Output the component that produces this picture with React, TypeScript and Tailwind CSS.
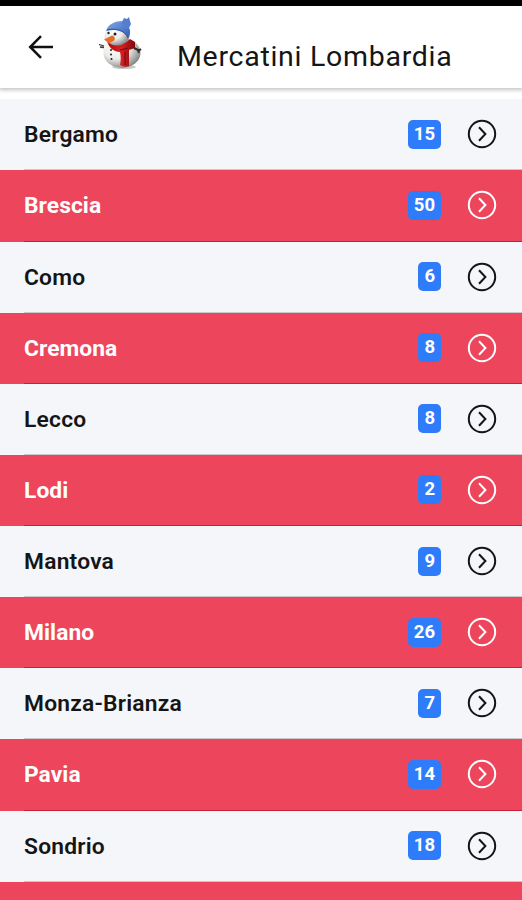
const provinces = [
  { name: "Bergamo", count: 15 },
  { name: "Brescia", count: 50 },
  { name: "Como", count: 6 },
  { name: "Cremona", count: 8 },
  { name: "Lecco", count: 8 },
  { name: "Lodi", count: 2 },
  { name: "Mantova", count: 9 },
  { name: "Milano", count: 26 },
  { name: "Monza-Brianza", count: 7 },
  { name: "Pavia", count: 14 },
  { name: "Sondrio", count: 18 },
];

function BackArrow() {
  return (
    <svg width="26" height="24" viewBox="0 0 26 24" fill="none" stroke="#111" strokeWidth="2.5">
      <path d="M13 1.2 2.2 12 13 22.8M2.2 12H25" />
    </svg>
  );
}

function Snowman() {
  return (
    <svg width="46" height="56" viewBox="0 0 46 56">
      <defs>
        <radialGradient id="snow" cx="0.35" cy="0.35" r="0.7">
          <stop offset="0" stopColor="#ffffff" />
          <stop offset="0.5" stopColor="#ebebe9" />
          <stop offset="1" stopColor="#858583" />
        </radialGradient>
        <linearGradient id="hat" x1="0" y1="0" x2="1" y2="1">
          <stop offset="0" stopColor="#83a9ea" />
          <stop offset="1" stopColor="#315cb4" />
        </linearGradient>
        <linearGradient id="scarf" x1="0" y1="0" x2="1" y2="0">
          <stop offset="0" stopColor="#a80e12" />
          <stop offset="0.5" stopColor="#d92023" />
          <stop offset="1" stopColor="#7d090e" />
        </linearGradient>
      </defs>
      {/* Shadow and body */}
      <ellipse cx="26" cy="50" rx="12" ry="2" fill="#c9c9c7" />
      <ellipse cx="24" cy="36" rx="18.5" ry="15" fill="url(#snow)" />
      {/* Arms */}
      <ellipse cx="5.5" cy="29.5" rx="4.5" ry="3" fill="#f5f5f3" />
      <path d="m1 27.5 5 1.5M2 30l4 .5" stroke="#393634" strokeWidth="1.3" />
      <path d="m36 31 5 2.500 2-1.500M40 33l1 3" stroke="#302d2c" strokeWidth="2" fill="none" />
      {/* Scarf */}
      <path d="M9 24c7 4 17 4 23-2l5 3v6l-6 2v16c-3 1-6 1-9-1 1-5 1-9 0-13-6 0-11-4-13-11z" fill="url(#scarf)" />
      <path d="M22 33l8-2M27 35v13" stroke="#77090e" fill="none" />
      {/* Head */}
      <ellipse cx="19" cy="18.500" rx="12.500" ry="10" fill="url(#snow)" />
      {/* Hat */}
      <path d="M8 14C10 7 17 4 25 4l4 4c4 4 4 9 1 13-4-8-13-9-22-7z" fill="url(#hat)" />
      <path d="m24 5 2-4 3 1 2-2 1 4 1 3-2 4-5 1z" fill="#527fd0" />
      <path d="M9 13c8-2 18 0 21 8" stroke="#2c51a1" fill="none" />
      {/* Face and buttons */}
      <circle cx="10.500" cy="16" r="1.200" fill="#222" />
      <circle cx="17" cy="17" r="1.500" fill="#222" />
      <path d="m14 18.500-8 4 5 4 5-3c2-2 0-5-2-5z" fill="#e56d28" />
      <circle cx="13" cy="33" r="1" fill="#222" />
      <circle cx="13" cy="37.500" r="1" fill="#222" />
      <circle cx="13.500" cy="42" r="1" fill="#222" />
    </svg>
  );
}

function ChevronCircle() {
  return (
    <svg width="30" height="30" viewBox="0 0 30 30" fill="none" stroke="currentColor" strokeWidth="2">
      <circle cx="15" cy="15" r="13.2" />
      <path d="m12 8.300 6.400 6.700-6.400 6.700" />
    </svg>
  );
}

export default function App() {
  return (
    <div className="flex h-[900px] w-[522px] flex-col overflow-hidden bg-white font-['Roboto',sans-serif] text-[#151515]">
      <div className="h-[5.5px] shrink-0 bg-black" />

      {/* Toolbar */}
      <header className="flex h-[82.5px] shrink-0 items-start bg-white pl-7 shadow-[0_1px_4px_1px_rgba(0,0,0,0.24)]">
        <div className="mt-[29.5px]">
          <BackArrow />
        </div>
        <div className="mt-[11.5px] ml-11">
          <Snowman />
        </div>
        <h1 className="mt-[32.5px] ml-[33px] text-[28.5px] leading-[38px] tracking-[0.72px] whitespace-nowrap">
          Mercatini Lombardia
        </h1>
      </header>

      {/* Province list */}
      <ul className="mt-[11.3px] shrink-0">
        {provinces.map((province, index) => {
          const red = index % 2 === 1;
          return (
            <li
              key={province.name}
              className={`flex h-[71.14px] pl-6 ${red ? "bg-[#ed455b] text-white" : "bg-[#f4f6fa]"}`}
            >
              <div
                className={`flex flex-1 items-center border-b pr-[25px] ${red ? "border-[#c81e3b]" : "border-[#cbc9cd]"}`}
              >
                <span
                  className={`flex-1 pt-[2px] text-[22.8px] ${red ? "font-bold tracking-[0.05px]" : "font-semibold tracking-[0.22px]"}`}
                >
                  {province.name}
                </span>
                <span className="mr-[26px] flex h-[29px] items-start justify-center rounded-[5px] bg-[#2f7cfb] px-[6px] pt-[3px] text-[18.5px] leading-[22px] font-bold text-white">
                  {province.count}
                </span>
                <ChevronCircle />
              </div>
            </li>
          );
        })}
      </ul>
      <div className="flex-1 bg-[#ed455b]" />
    </div>
  );
}
